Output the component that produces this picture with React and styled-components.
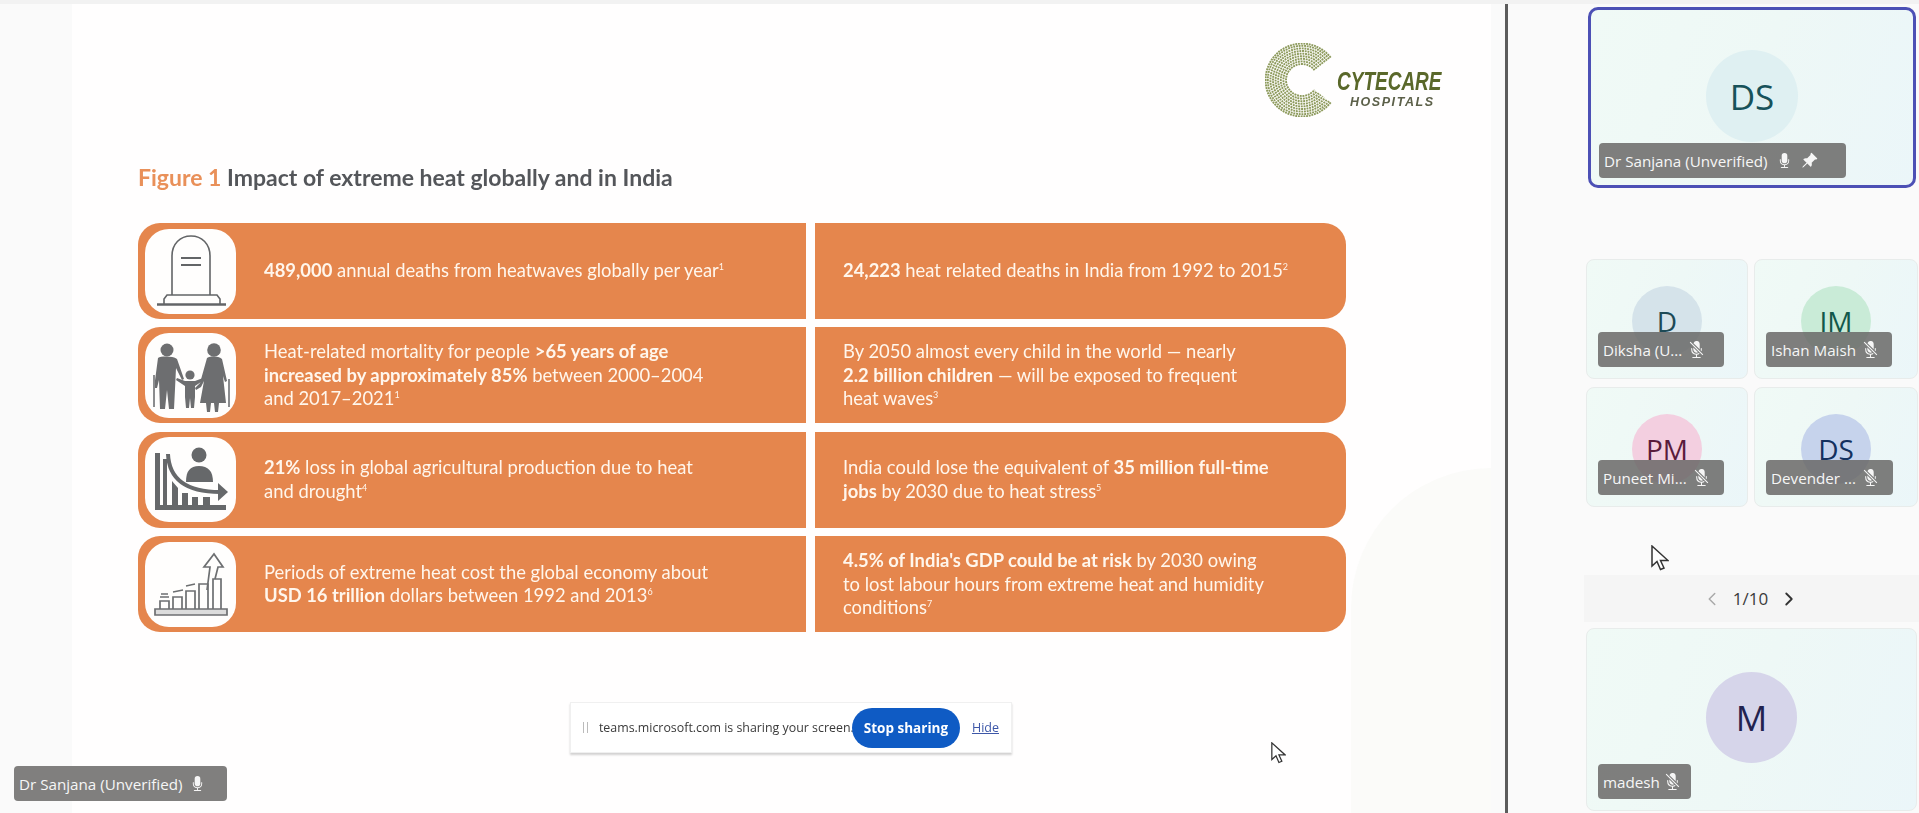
// Meeting view: shared slide on the left, participant tiles on the right

import React from "react";
import styled, { createGlobalStyle } from "styled-components";
import { BsMicFill, BsMicMuteFill, BsPinAngleFill } from "react-icons/bs";
import { ChevronLeft, ChevronRight } from "lucide-react";

const GlobalStyle = createGlobalStyle`
    html, body {
        margin: 0;
        padding: 0;
        background: #fafafa;
    }
    * {
        box-sizing: border-box;
    }
`;

const Page = styled.div`
    display: flex;
    flex-direction: column;
    width: 1919px;
    height: 813px;
    overflow: hidden;
    background: #fafafa;
    font-family: "Open Sans", "Liberation Sans", sans-serif;
`;

const TopStrip = styled.div`
    flex: none;
    height: 4px;
    background: #f2f2f2;
`;

const Body = styled.div`
    flex: 1;
    display: flex;
    min-height: 0;
`;

const Stage = styled.main`
    position: relative;
    flex: none;
    width: 1505px;
    padding-left: 72px;
    padding-right: 14px;
`;

const Divider = styled.div`
    flex: none;
    width: 3px;
    background: #5c5c5c;
`;

const Slide = styled.section`
    position: relative;
    height: 100%;
    padding: 39px 24px 0 66px;
    background: #fffefe;
    font-family: Lato, "Open Sans", sans-serif;
    filter: blur(0.45px);
`;

const Watermark = styled.div`
    position: absolute;
    right: 0;
    bottom: 0;
    width: 140px;
    height: 345px;
    background: #fbfbf9;
    border-top-left-radius: 140px;
`;

const LogoRow = styled.div`
    position: relative;
    display: flex;
    justify-content: flex-end;
    height: 74px;
    padding-right: 25px;
`;

const LogoText = styled.div`
    display: flex;
    flex-direction: column;
    width: 105px;
    margin-left: -2px;
    padding-top: 26px;
    font-family: "Liberation Sans", sans-serif;
    font-style: italic;
    font-weight: 700;
`;

const LogoName = styled.div`
    height: 26px;
    color: #5a682a;
    font-size: 25px;
    line-height: 24px;
    white-space: nowrap;
    transform: scaleX(0.76);
    transform-origin: left center;
`;

const LogoSub = styled.div`
    padding-left: 13px;
    color: #5c6049;
    font-size: 12.5px;
    line-height: 14px;
    letter-spacing: 1.55px;
    white-space: nowrap;
`;

const Title = styled.h1`
    position: relative;
    margin: 45px 0 31px;
    color: #54565a;
    font-size: 23px;
    font-weight: 700;
    line-height: 30px;
    white-space: nowrap;
`;

const TitleMark = styled.span`
    color: #e99059;
`;

const Table = styled.div`
    position: relative;
    display: grid;
    grid-template-columns: 668px 531px;
    grid-auto-rows: 96px;
    column-gap: 9px;
    row-gap: 8.4px;
`;

const Cell = styled.div`
    display: flex;
    align-items: center;
    padding: ${({ $side }) => ($side === "left" ? "0 40px 0 7px" : "0 20px 0 28px")};
    border-radius: ${({ $side }) => ($side === "left" ? "22px 0 0 22px" : "0 22px 22px 0")};
    background: #e5864d;
`;

const IconBox = styled.div`
    flex: none;
    display: flex;
    width: 91px;
    height: 85px;
    margin-right: 28px;
    border-radius: 24px;
    background: #fffefd;
`;

const CellText = styled.p`
    margin: 0;
    color: #fff6ec;
    font-size: 18.4px;
    line-height: 23.3px;

    b {
        font-weight: 700;
    }

    sup {
        font-size: 9px;
        line-height: 0;
    }
`;

const ShareBar = styled.div`
    position: relative;
    display: flex;
    align-items: center;
    width: 442px;
    height: 51px;
    margin: 70px 0 0 432px;
    padding: 0 12px 0 12px;
    background: #fff;
    border: 1px solid #f0f0f0;
    box-shadow: 0 2px 2px rgba(0, 0, 0, 0.18);
    font-family: "Open Sans", sans-serif;
`;

const Grip = styled.span`
    width: 5px;
    height: 11px;
    margin-right: 11px;
    border-left: 1px solid #bbb;
    border-right: 1px solid #bbb;
`;

const ShareText = styled.span`
    width: 253px;
    color: #3a3a3a;
    font-size: 12.4px;
    white-space: nowrap;
`;

const StopButton = styled.span`
    display: flex;
    align-items: center;
    justify-content: center;
    width: 111px;
    height: 40px;
    border-radius: 20px;
    background: #0f5bc4;
    color: #fff;
    font-size: 13.5px;
    font-weight: 700;
`;

const HideLink = styled.span`
    margin-left: 12px;
    color: #3d57a8;
    font-size: 12.5px;
    text-decoration: underline;
`;

const NameTag = styled.div`
    position: absolute;
    left: ${({ $x }) => $x}px;
    bottom: ${({ $y }) => $y}px;
    display: flex;
    align-items: center;
    gap: ${({ $gap }) => $gap || 7}px;
    height: 35px;
    width: ${({ $w }) => $w}px;
    padding: 0 5px;
    border-radius: 4px;
    background: rgba(104, 103, 101, 0.84);
    color: #f6f6f6;
    font-family: "Open Sans", sans-serif;
    font-size: 15.2px;
    white-space: nowrap;

    svg {
        flex: none;
    }
`;

const Panel = styled.aside`
    flex: 1;
    display: flex;
    flex-direction: column;
    padding-top: 3px;
    padding-left: 78px;
`;

const Tile = styled.div`
    position: relative;
    display: flex;
    align-items: center;
    justify-content: center;
    border: 1px solid #e8eceb;
    border-radius: 8px;
    background: linear-gradient(110deg, #f0faf6 0%, #eef8f6 50%, #ebf6f9 100%);
`;

const FeaturedTile = styled(Tile)`
    width: 328px;
    height: 181px;
    margin-left: 2px;
    padding-bottom: 3px;
    border: 3px solid #4c50b5;
    border-radius: 10px;
`;

const TileGrid = styled.div`
    display: grid;
    grid-template-columns: 162px 164px;
    grid-auto-rows: 120px;
    gap: 8px 6px;
    margin-top: 71px;
`;

const Pager = styled.div`
    display: flex;
    align-items: center;
    justify-content: center;
    gap: 10px;
    height: 47px;
    margin: 68px 0 6px -2px;
    padding-right: 2px;
    background: #f5f5f5;
    color: #3b3b3b;
    font-size: 17px;
`;

const WideTile = styled(Tile)`
    width: 331px;
    height: 183px;
`;

const Avatar = styled.div`
    display: flex;
    align-items: center;
    justify-content: center;
    flex: none;
    width: ${({ $size }) => $size}px;
    height: ${({ $size }) => $size}px;
    margin-top: ${({ $shift }) => $shift || 0}px;
    border-radius: 50%;
    background: ${({ $bg }) => $bg};
    color: ${({ $fg }) => $fg};
    font-size: ${({ $size }) => ($size > 80 ? 35 : 28)}px;
    font-weight: 500;
`;

const Pointer = styled.svg`
    position: absolute;
    left: ${({ $x }) => $x}px;
    top: ${({ $y }) => $y}px;
`;

const polar = (r, deg) => {
    const a = (deg * Math.PI) / 180;
    return [37 + r * Math.cos(a), 37 + r * Math.sin(a)];
};

const LogoMark = () => {
    const radii = [16, 18.6, 21.2, 23.8, 26.4, 29, 31.6, 34.2, 36.4];
    return (
        <svg width="74" height="74" viewBox="0 0 74 74">
            {radii.map((r) => {
                const [x1, y1] = polar(r, -38);
                const [x2, y2] = polar(r, 38);
                return (
                    <path
                        key={r}
                        d={`M${x1} ${y1}A${r} ${r} 0 1 0 ${x2} ${y2}`}
                        fill="none"
                        stroke="#8d9a5c"
                        strokeWidth="1.9"
                        strokeDasharray="1.9 .8"
                    />
                );
            })}
        </svg>
    );
};

const GraveIcon = () => (
    <svg width="91" height="85" viewBox="0 0 91 85" fill="none" stroke="#636567" strokeWidth="1.6">
        <path d="M27 66V27C27 15 35 7 46 7s19 8 19 20v39" />
        <path d="M36 29h20M36 36h20" strokeWidth="2" />
        <path d="M19 75v-5l3-4h50l3 4v5" />
        <path d="M12 75.5h69" strokeWidth="2.4" />
    </svg>
);

const FamilyIcon = () => (
    <svg width="91" height="85" viewBox="0 0 91 85" fill="#6d6e70">
        <circle cx="22" cy="17" r="6.5" />
        <path d="M13 25c3-2 15-2 19 1l7 20-2 1-6-12-1 21-1 20h-5l-2-19-2 19h-5l-1-29-2 8h-3z" />
        <circle cx="45" cy="42" r="4.6" />
        <path d="M40 48h10l8-3 1 2-9 6v11l-1 11h-3l-1-10-1 10h-3l-1-11V53l-9-6 1-2z" />
        <circle cx="69" cy="17" r="6.8" />
        <path d="M62 25c4-2 11-2 15 1l5 22-2 1-2-6 3 27H74l-1 9h-3l-1-9h-3l-1 9h-3l-1-9h-6l4-22-3 6-5 3-1-2 5-5z" />
        <path d="M9 42v32M84 46v28" stroke="#8b8c8e" strokeWidth="2" fill="none" />
    </svg>
);

const DeclineIcon = () => (
    <svg width="91" height="85" viewBox="0 0 91 85" fill="#66686a">
        <circle cx="54" cy="18" r="7.5" />
        <path d="M41 45c0-11 4-16 13-16s14 5 14 16z" />
        <path d="M10 16h5v52h66v5H10z" />
        <path d="M18 22h4v46h-4zM27 44l6 7v17h-6zM37 56h6v12h-6zM47 60h6v8h-6zM58 60h7v8h-7z" />
        <path d="M23 17c1 25 18 38 52 38" fill="none" stroke="#66686a" strokeWidth="4" />
        <path d="M73 46l10 9-10 9z" />
    </svg>
);

const GrowthIcon = () => (
    <svg width="91" height="85" viewBox="0 0 91 85" fill="none" stroke="#6d6f71" strokeWidth="1.7">
        <path d="M10 67h72v6H10z" fill="#dcdcdc" />
        <path d="M15 67v-8h9v8M28 67V55h9v12M41 67V49h9v18M54 67V42h9v25M68 67V37h8v30" />
        <path d="M15 55h9M16 52h7" strokeWidth="1.3" />
        <path d="M28 50l10-2M41 44l9-2" strokeWidth="1.3" />
        <path d="M62 48l3-23h-6l10-13 9 13h-5l-3 12" />
    </svg>
);

const rows = [
    {
        icon: <GraveIcon />,
        left: <><b>489,000</b> annual deaths from heatwaves globally per year<sup>1</sup></>,
        right: <><b>24,223</b> heat related deaths in India from 1992 to 2015<sup>2</sup></>,
    },
    {
        icon: <FamilyIcon />,
        left: <>Heat-related mortality for people <b>&gt;65 years of age<br />increased by approximately 85%</b> between 2000–2004<br />and 2017–2021<sup>1</sup></>,
        right: <>By 2050 almost every child in the world — nearly<br /><b>2.2 billion children</b> — will be exposed to frequent<br />heat waves<sup>3</sup></>,
    },
    {
        icon: <DeclineIcon />,
        left: <><b>21%</b> loss in global agricultural production due to heat<br />and drought<sup>4</sup></>,
        right: <>India could lose the equivalent of <b>35 million full-time<br />jobs</b> by 2030 due to heat stress<sup>5</sup></>,
    },
    {
        icon: <GrowthIcon />,
        left: <>Periods of extreme heat cost the global economy about<br /><b>USD 16 trillion</b> dollars between 1992 and 2013<sup>6</sup></>,
        right: <><b>4.5% of India's GDP could be at risk</b> by 2030 owing<br />to lost labour hours from extreme heat and humidity<br />conditions<sup>7</sup></>,
    },
];

const smallTiles = [
    { initials: "D", bg: "#d5e3ea", fg: "#1d4a56", name: "Diksha (U...", w: 126 },
    { initials: "IM", bg: "#c9ebd7", fg: "#12584a", name: "Ishan Maish", w: 126 },
    { initials: "PM", bg: "#f3cfe0", fg: "#5a1c3c", name: "Puneet Mi...", w: 126 },
    { initials: "DS", bg: "#c6d3ec", fg: "#14315f", name: "Devender ...", w: 127 },
];

const Cursor = ({ x, y, size }) => (
    <Pointer $x={x} $y={y} width={size} height={size * 1.45} viewBox="0 0 18 26">
        <path d="M1 1v20l5-4.5 3.5 8 3.5-1.5-3.5-7.5H17z" fill="#fff" stroke="#333" strokeWidth="1.5" />
    </Pointer>
);

const App = () => (
    <Page>
        <GlobalStyle />
        <TopStrip />
        <Body>
            <Stage>
                <Slide>
                    <Watermark />
                    <LogoRow>
                        <LogoMark />
                        <LogoText>
                            <LogoName>CYTECARE</LogoName>
                            <LogoSub>HOSPITALS</LogoSub>
                        </LogoText>
                    </LogoRow>
                    <Title><TitleMark>Figure 1</TitleMark> Impact of extreme heat globally and in India</Title>
                    <Table>
                        {rows.map((row, i) => (
                            <React.Fragment key={i}>
                                <Cell $side="left">
                                    <IconBox>{row.icon}</IconBox>
                                    <CellText>{row.left}</CellText>
                                </Cell>
                                <Cell $side="right">
                                    <CellText>{row.right}</CellText>
                                </Cell>
                            </React.Fragment>
                        ))}
                    </Table>
                    <ShareBar>
                        <Grip />
                        <ShareText>teams.microsoft.com is sharing your screen.</ShareText>
                        <StopButton>Stop sharing</StopButton>
                        <HideLink>Hide</HideLink>
                    </ShareBar>
                </Slide>
                <NameTag $x={14} $y={12} $w={213}>
                    Dr Sanjana (Unverified) <BsMicFill size={15} />
                </NameTag>
                <Cursor x={1271} y={738} size={15} />
            </Stage>
            <Divider />
            <Panel>
                <FeaturedTile>
                    <Avatar $size={92} $bg="#dff0f2" $fg="#17525a">DS</Avatar>
                    <NameTag $x={8} $y={7} $w={247} $gap={9}>
                        Dr Sanjana (Unverified) <BsMicFill size={15} /> <BsPinAngleFill size={17} />
                    </NameTag>
                </FeaturedTile>
                <TileGrid>
                    {smallTiles.map((tile) => (
                        <Tile key={tile.name}>
                            <Avatar $size={70} $shift={3} $bg={tile.bg} $fg={tile.fg}>{tile.initials}</Avatar>
                            <NameTag $x={11} $y={11} $w={tile.w} $gap={6}>
                                {tile.name} <BsMicMuteFill size={17} />
                            </NameTag>
                        </Tile>
                    ))}
                </TileGrid>
                <Pager>
                    <ChevronLeft size={22} color="#a9a9a9" strokeWidth={1.6} />
                    <span>1/10</span>
                    <ChevronRight size={22} color="#333" strokeWidth={2} />
                </Pager>
                <WideTile>
                    <Avatar $size={91} $shift={-4} $bg="#d6d5ea" $fg="#22224f">M</Avatar>
                    <NameTag $x={11} $y={11} $w={93} $gap={4}>
                        madesh <BsMicMuteFill size={17} />
                    </NameTag>
                </WideTile>
            </Panel>
        </Body>
        <Cursor x={1651} y={545} size={18} />
    </Page>
);

export default App;
